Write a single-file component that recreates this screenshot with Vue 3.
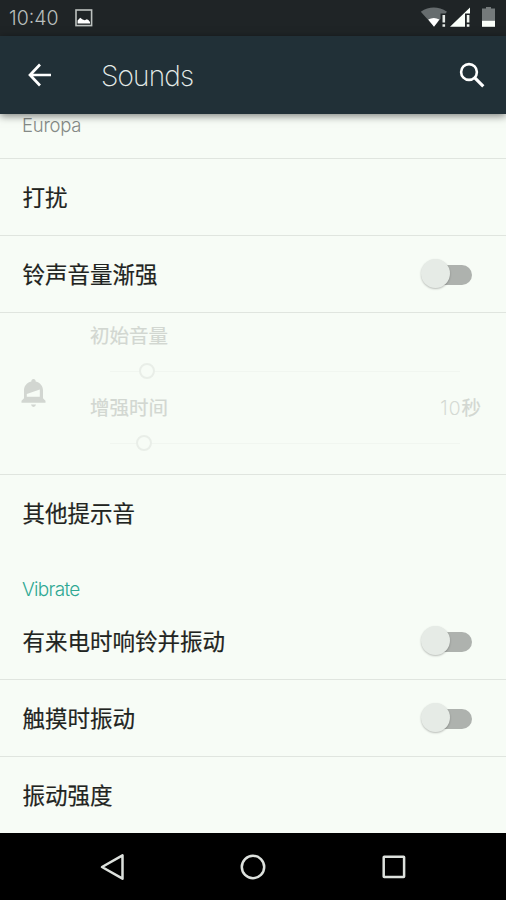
<script setup>
const topRows = [
  { label: '打扰', toggle: false },
  { label: '铃声音量渐强', toggle: true },
]
const vibrateRows = [
  { label: '有来电时响铃并振动', toggle: true },
  { label: '触摸时振动', toggle: true },
  { label: '振动强度', toggle: false },
]
const sliders = [
  { label: '初始音量', amount: '', unit: '', percent: 10.6 },
  { label: '增强时间', amount: '10', unit: '秒', percent: 9.6 },
]
</script>

<template>
  <div class="screen">
    <div class="status">
      <span class="clock">10:40</span>
      <svg class="picture" width="18" height="18" viewBox="0 0 18 18">
        <rect x="1" y="1" width="15.6" height="15.6" fill="none" stroke="#bcc1bf" stroke-width="1.6" />
        <path d="M2.600 14.600V11.500L5.200 8.800l2.400 1.600 2.200.8 2-1 1.600.8 1.600 2v1.600z" fill="#fff" />
      </svg>
      <svg class="signals" width="80" height="24" viewBox="0 0 80 24">
        <path d="M.8 5.800Q13.500-2.600 27 5.800L25.500 7.500H20.500V13L14 20.600z" fill="#666c6e" />
        <path d="M8.200 13.600Q13.800 10.200 19.400 13.600L14 20.800z" fill="#fff" />
        <path d="M22.500 9h2.600v7.500h-2.600zM22.500 18.300h2.600v2.500h-2.600z" fill="#e4e8e5" />
        <path d="M30 20.800L50 1.500V7.500h-5v13.300z" fill="#fafffa" />
        <path d="M46.800 9h2.600v7.500h-2.600zM46.800 18.300h2.600v2.500h-2.600z" fill="#f2f7f2" />
        <path d="M62 2.500h4V1h5v1.500h4V15H62z" fill="#757a7b" />
        <path d="M62 14.800h13v6H62z" fill="#fafffa" />
      </svg>
    </div>

    <header class="bar">
      <svg class="back" width="24" height="24" viewBox="0 0 24 24" fill="none" stroke="#fff" stroke-width="2.7">
        <path d="M13 1.500L3 12l10 10.500M3 12H24" />
      </svg>
      <h1 class="title">Sounds</h1>
      <svg class="search" width="26" height="26" viewBox="0 0 26 26" fill="none" stroke="#fff">
        <circle cx="10" cy="10" r="7.900" stroke-width="2.600" />
        <path d="M15.600 15.600L24.300 24.300" stroke-width="3.200" />
      </svg>
    </header>

    <main class="content">
      <div class="partial">Europa</div>

      <div v-for="row in topRows" :key="row.label" class="row">
        <span class="label">{{ row.label }}</span>
        <span v-if="row.toggle" class="switch"><i class="track"></i><i class="thumb"></i></span>
      </div>

      <div class="ramp">
        <svg class="bell" width="25" height="29" viewBox="0 0 25 29">
          <path d="M12.500 0c1.400 0 2.200 1 2.200 2.400 4.800 1.300 7.300 4.700 7.300 9v7.800l2.500 2.600v2H.5v-2L3 19.200v-7.800c0-4.300 2.500-7.700 7.300-9C10.300 1 11.100 0 12.500 0z" fill="#d2d6d1" />
          <path d="M5.800 17.800V15L18.800 10.500V17.800z" fill="#f7fcf6" />
          <path d="M10 25.600h5q-.5 2.400-2.500 2.400t-2.500-2.400z" fill="#d2d6d1" />
        </svg>
        <div class="sliders">
          <div v-for="s in sliders" :key="s.label" class="setting">
            <div class="caption">
              <span>{{ s.label }}</span>
              <span class="value"><span class="amount">{{ s.amount }}</span>{{ s.unit }}</span>
            </div>
            <div class="seek"><i class="knob" :style="{ left: s.percent + '%' }"></i></div>
          </div>
        </div>
      </div>

      <div class="row last">
        <span class="label">其他提示音</span>
      </div>

      <h2 class="section">Vibrate</h2>

      <div v-for="row in vibrateRows" :key="row.label" class="row">
        <span class="label">{{ row.label }}</span>
        <span v-if="row.toggle" class="switch"><i class="track"></i><i class="thumb"></i></span>
      </div>
    </main>

    <nav class="nav">
      <svg width="28" height="28" viewBox="0 0 28 28"><path d="M3 14L23.500 2.300V25.700z" /></svg>
      <svg width="28" height="28" viewBox="0 0 28 28"><circle cx="14" cy="14" r="11.200" /></svg>
      <svg width="28" height="28" viewBox="0 0 28 28"><rect x="3.700" y="3.700" width="20.400" height="20.400" rx=".5" /></svg>
    </nav>
  </div>
</template>

<style>
body {
  margin: 0;
  background: #000;
}
</style>

<style scoped>
.screen {
  width: 506px;
  height: 900px;
  display: flex;
  flex-direction: column;
  overflow: hidden;
  background: #f7fcf6;
  color: #1f2421;
  font-family: Inter, "Noto Sans CJK SC", sans-serif;
}
.status {
  height: 36px;
  flex: none;
  display: flex;
  align-items: center;
  box-sizing: border-box;
  padding: 0 10px 0 9px;
  background: #1f2426;
}
.clock {
  width: 66px;
  font-size: 19.500px;
  font-weight: 300;
  color: #b9bfbd;
  white-space: nowrap;
}
.picture {
  display: block;
}
.signals {
  display: block;
  margin-left: auto;
  margin-right: -4px;
}
.bar {
  height: 78px;
  flex: none;
  box-sizing: border-box;
  display: flex;
  align-items: center;
  padding: 0 21px 0 27px;
  background: #213037;
  box-shadow: 0 2px 8px rgba(0, 0, 0, 0.5);
  position: relative;
  z-index: 1;
}
.title {
  margin: 2px 0 0 50px;
  font-size: 28px;
  line-height: 36px;
  font-weight: 200;
  letter-spacing: -0.85px;
  color: #e6ece9;
}
.search {
  margin-left: auto;
}
.content {
  flex: 1;
  overflow: hidden;
}
.partial {
  height: 44px;
  border-bottom: 1px solid #e0e5df;
  padding-left: 22px;
  font-size: 18.500px;
  line-height: 23px;
  font-weight: 300;
  letter-spacing: -0.25px;
  color: #858a86;
}
.row {
  height: 77px;
  box-sizing: border-box;
  border-bottom: 1px solid #e0e5df;
  display: flex;
  align-items: center;
  justify-content: space-between;
  padding: 0 34px 0 22.500px;
}
.row.last {
  border-bottom-color: transparent;
}
.label {
  padding-top: 1px;
  font-size: 22.500px;
  line-height: 32px;
  -webkit-text-stroke: 0.2px currentColor;
}
.switch {
  position: relative;
  width: 51px;
  height: 32px;
}
.track {
  position: absolute;
  left: 10px;
  right: 0;
  top: 7px;
  height: 20px;
  border-radius: 10px;
  background: #aeb2ae;
}
.thumb {
  position: absolute;
  left: 0;
  top: 1px;
  width: 29px;
  height: 29px;
  border-radius: 50%;
  background: #e6ebe6;
  box-shadow: 0 1px 2px rgba(0, 0, 0, 0.25);
}
.ramp {
  height: 162px;
  box-sizing: border-box;
  border-bottom: 1px solid #e0e5df;
  display: flex;
  align-items: center;
  padding: 0 25px 0 21px;
  color: #d2d7d1;
}
.bell {
  flex: none;
}
.sliders {
  flex: 1;
  margin-left: 44px;
  align-self: flex-start;
  padding-top: 8px;
}
.setting {
  height: 72px;
}
.caption {
  display: flex;
  justify-content: space-between;
  font-size: 19.500px;
  line-height: 30px;
  -webkit-text-stroke: 0.2px currentColor;
}
.amount {
  font-weight: 200;
  letter-spacing: 1px;
}
.seek {
  position: relative;
  height: 1px;
  margin: 20px 21px 0 20px;
  background: #f1f6f0;
}
.knob {
  position: absolute;
  top: -8px;
  width: 12px;
  height: 12px;
  margin-left: -8px;
  border: 2.500px solid #e9eee8;
  border-radius: 50%;
  background: #f7fcf6;
}
.section {
  margin: 0;
  height: 51px;
  box-sizing: border-box;
  padding: 25px 0 0 22px;
  font-size: 19px;
  line-height: 26px;
  font-weight: 300;
  letter-spacing: -0.7px;
  color: #2fa893;
}
.nav {
  height: 67px;
  flex: none;
  display: flex;
  justify-content: center;
  align-items: center;
  gap: 112.500px;
  background: #000;
}
.nav svg {
  fill: none;
  stroke: #dde1dd;
  stroke-width: 2.500;
  stroke-linejoin: round;
}
</style>
